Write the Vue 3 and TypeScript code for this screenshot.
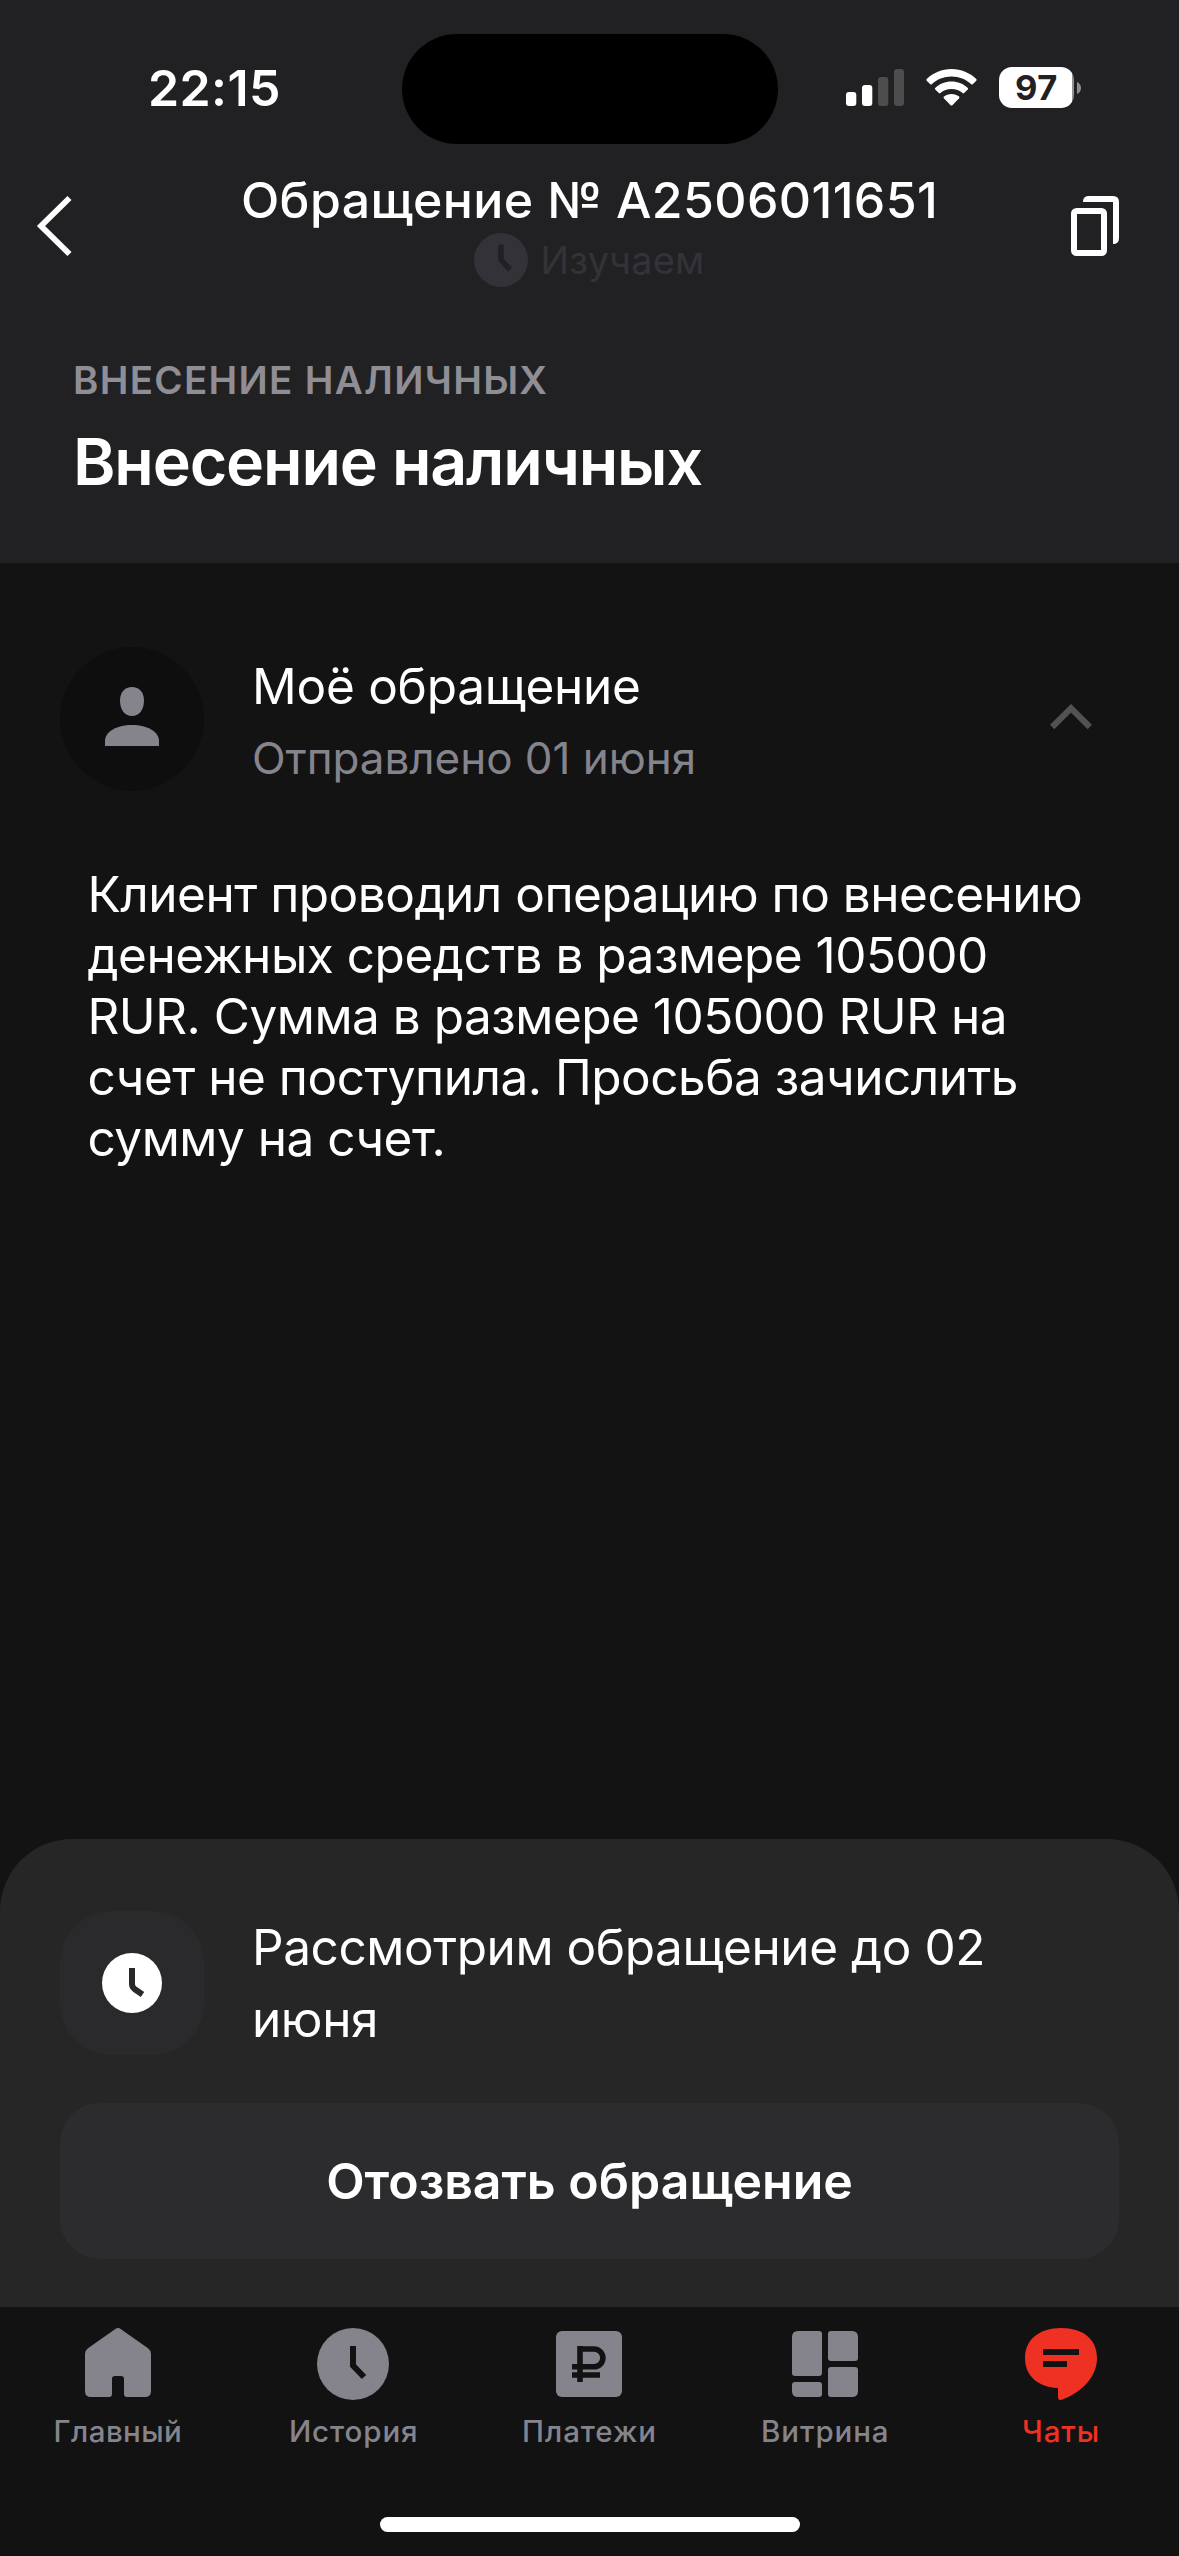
<script setup lang="ts">
interface Tab {
  id: 'home' | 'history' | 'payments' | 'showcase' | 'chats'
  label: string
  active?: boolean
}

const appeal = {
  number: 'Обращение № A2506011651',
  status: 'Изучаем',
  category: 'ВНЕСЕНИЕ НАЛИЧНЫХ',
  title: 'Внесение наличных',
  sent: 'Отправлено 01 июня',
  lines: [
    'Клиент проводил операцию по внесению',
    'денежных средств в размере 105000',
    'RUR. Сумма в размере 105000 RUR на',
    'счет не поступила. Просьба зачислить',
    'сумму на счет.',
  ],
}

const tabs: Tab[] = [
  { id: 'home', label: 'Главный' },
  { id: 'history', label: 'История' },
  { id: 'payments', label: 'Платежи' },
  { id: 'showcase', label: 'Витрина' },
  { id: 'chats', label: 'Чаты', active: true },
]
</script>

<template>
  <div class="screen">
    <header class="top">
      <div class="status-bar">
        <div class="time">22:15</div>
        <div class="island"></div>
        <div class="indicators">
          <svg class="signal" width="58" height="37" viewBox="0 0 58 37">
            <rect x="0" y="23" width="10.3" height="14" rx="3" fill="#fff" />
            <rect x="16" y="16" width="10.3" height="21" rx="3" fill="#fff" />
            <rect x="32" y="8" width="10.3" height="29" rx="3" fill="#4d4d4e" />
            <rect x="48" y="0" width="10" height="37" rx="3" fill="#4d4d4e" />
          </svg>
          <svg class="wifi" width="51" height="37" viewBox="0 0 51 37" fill="#fff">
            <path d="M25.5 0C35.2 0 43.9 3.800 50.300 10.100Q51 10.900 50.300 11.700L46.700 15.200Q46 15.900 45.200 15.200C40 10.300 33.100 7.500 25.500 7.500S11 10.300 5.800 15.200Q5 15.900 4.300 15.200L.7 11.700Q0 10.900.7 10.100C7.100 3.800 15.800 0 25.500 0Z" />
            <path d="M25.500 12.600C31.900 12.600 37.500 15 41.800 18.900Q42.500 19.700 41.800 20.400L38.100 24.100Q37.400 24.700 36.600 24.100C33.600 21.500 29.800 20 25.500 20S17.400 21.500 14.400 24.100Q13.600 24.700 12.900 24.100L9.200 20.400Q8.500 19.700 9.200 18.900C13.500 15 19.100 12.600 25.500 12.600Z" />
            <path d="M25.500 24.900C28.400 24.900 31 25.900 33.100 27.500Q33.900 28.300 33.100 29.200L26.400 36.200Q25.500 37 24.600 36.200L17.900 29.200Q17.100 28.300 17.900 27.500C20 25.900 22.600 24.900 25.500 24.900Z" />
          </svg>
          <div class="battery">97</div>
          <svg class="nub" width="4" height="12" viewBox="0 0 4 12"><path d="M0 0C2.700 1.200 4 3.400 4 6S2.700 10.800 0 12Z" fill="#8d8d8e" /></svg>
        </div>
      </div>

      <nav class="nav">
        <button class="nav-btn" aria-label="Назад">
          <svg width="36" height="60" viewBox="0 0 36 60"><path d="M32.500 2L4 30L32.500 58" fill="none" stroke="#fff" stroke-width="5.800" /></svg>
        </button>
        <div class="nav-title">
          <div class="number">{{ appeal.number }}</div>
          <div class="status">
            <svg width="54" height="54" viewBox="0 0 54 54">
              <circle cx="27" cy="27" r="27" fill="#333238" />
              <path d="M27 11.500V27L36 36.500" fill="none" stroke="#212123" stroke-width="5.500" />
            </svg>
            <span>{{ appeal.status }}</span>
          </div>
        </div>
        <button class="nav-btn" aria-label="Копировать">
          <svg width="48" height="60" viewBox="0 0 48 60" fill="none" stroke="#fff" stroke-width="6">
            <rect x="3" y="15" width="30" height="42" rx="2.500" />
            <path d="M12 6V5.500Q12 0 18 0H42Q48 0 48 6V42Q48 48 42 48V6Z" fill="#fff" stroke="none" />
          </svg>
        </button>
      </nav>

      <div class="heading">
        <div class="category">{{ appeal.category }}</div>
        <h1>{{ appeal.title }}</h1>
      </div>
    </header>

    <main class="content">
      <section class="entry">
        <div class="avatar">
          <svg width="54" height="60" viewBox="0 0 54 60" fill="#85848c">
            <path d="M27 0C34.200 0 39 5.200 39 13.500C39 22.500 34.500 29 27 29S15 22.500 15 13.500C15 5.200 19.800 0 27 0Z" />
            <path d="M0 59V54C0 45 11 38 27 38S54 45 54 54V59Z" />
          </svg>
        </div>
        <div class="entry-text">
          <div class="entry-title">Моё обращение</div>
          <div class="entry-date">{{ appeal.sent }}</div>
        </div>
        <svg class="chevron" width="42" height="26" viewBox="0 0 42 26"><path d="M2.200 23L21 4.300L39.800 23" fill="none" stroke="#525254" stroke-width="6" /></svg>
      </section>
      <p class="message">
        <span v-for="line in appeal.lines" :key="line">{{ line }}</span>
      </p>
    </main>

    <section class="sheet">
      <div class="notice">
        <div class="tile">
          <svg width="60" height="60" viewBox="0 0 60 60">
            <circle cx="30" cy="30" r="30" fill="#fff" />
            <path d="M30 15V31Q30 34 32.500 36L40.500 41.500" fill="none" stroke="#29292b" stroke-width="6" />
          </svg>
        </div>
        <p>Рассмотрим обращение до 02<br />июня</p>
      </div>
      <button class="action">Отозвать обращение</button>
    </section>

    <footer class="tab-bar">
      <div class="tabs">
        <div v-for="tab in tabs" :key="tab.id" class="tab" :class="{ active: tab.active }">
          <svg width="72" height="72" viewBox="0 0 72 72" fill="currentColor">
            <path v-if="tab.id === 'home'" d="M33 1.200Q36-1.200 39 1.200L66 20.300Q69 22.500 69 26V63Q69 69 63 69H45Q42 69 42 66V51Q42 48 39 48H33Q30 48 30 51V66Q30 69 27 69H9Q3 69 3 63V26Q3 22.500 6 20.300Z" />
            <template v-else-if="tab.id === 'history'">
              <circle cx="36" cy="36" r="36" />
              <path d="M36 18V37.500L47 49" fill="none" stroke="#121212" stroke-width="6" />
            </template>
            <template v-else-if="tab.id === 'payments'">
              <rect x="3" y="3" width="66" height="66" rx="6" />
              <path d="M27 54V18M27 21H41A8.900 8.900 0 0 1 41 38.800H19M19 47H47" fill="none" stroke="#121212" stroke-width="5.600" />
            </template>
            <g v-else-if="tab.id === 'showcase'">
              <path d="M9 3H30Q33 3 33 6V45Q33 48 30 48H6Q3 48 3 45V9Q3 3 9 3Z" />
              <path d="M42 3H63Q69 3 69 9V30Q69 33 66 33H42Q39 33 39 30V6Q39 3 42 3Z" />
              <path d="M6 54H30Q33 54 33 57V66Q33 69 30 69H9Q3 69 3 63V57Q3 54 6 54Z" />
              <path d="M42 39H66Q69 39 69 42V63Q69 69 63 69H42Q39 69 39 66V42Q39 39 42 39Z" />
            </g>
            <template v-else>
              <path d="M36 0C58 0 72 11 72 30C72 49 57 64 37.500 71.600Q33 73 33 69V60C13 59 0 48 0 30S14 0 36 0Z" />
              <path d="M18 24H54M18 36H42" fill="none" stroke="#121212" stroke-width="6" />
            </template>
          </svg>
          <span>{{ tab.label }}</span>
        </div>
      </div>
      <div class="home-indicator"></div>
    </footer>
  </div>
</template>

<style>
body {
  background: #131313;
}
</style>

<style scoped>
.screen {
  display: flex;
  flex-direction: column;
  width: 1179px;
  height: 2556px;
  overflow: hidden;
  background: #131313;
  color: #fff;
  font-family: Inter, 'Liberation Sans', sans-serif;
}

button {
  padding: 0;
  border: 0;
  background: none;
  color: inherit;
  font-family: inherit;
}

svg {
  display: block;
  flex: none;
  overflow: visible;
}

.top {
  height: 563px;
  background: #212123;
}

.status-bar {
  display: grid;
  grid-template-columns: 402px 376px 401px;
  height: 136px;
  padding-top: 34px;
}

.time {
  padding-left: 148px;
  font-size: 50px;
  font-weight: 600;
  line-height: 108px;
  letter-spacing: 0.4px;
}

.island {
  height: 110px;
  border-radius: 55px;
  background: #000;
}

.indicators {
  display: flex;
  align-items: center;
  height: 107px;
  padding-left: 68px;
}

.wifi {
  margin-left: 22px;
}

.battery {
  width: 75px;
  height: 41px;
  margin-left: 22px;
  border-radius: 13px;
  background: linear-gradient(90deg, #fff 73.5px, #909091 73.5px);
  color: #212123;
  font-size: 34.5px;
  font-weight: 700;
  line-height: 41px;
  letter-spacing: 0.5px;
  text-align: center;
}

.nub {
  margin-left: 3px;
}

.nav {
  display: flex;
  align-items: flex-start;
  justify-content: space-between;
  height: 120px;
  padding: 0 60px 0 37px;
}

.nav-btn {
  width: 48px;
  margin-top: 26px;
}

.nav-title {
  display: flex;
  flex-direction: column;
  align-items: center;
}

.number {
  margin-left: 23px;
  font-size: 50px;
  font-weight: 500;
  line-height: 60px;
  letter-spacing: 0.38px;
}

.status {
  display: flex;
  gap: 13px;
  margin-top: 3px;
  margin-left: 22px;
  color: #333238;
  font-size: 38px;
  line-height: 55px;
  letter-spacing: 0.15px;
}

.heading {
  padding: 66px 0 0 73px;
}

.category {
  color: #8f8e95;
  font-size: 38.5px;
  font-weight: 600;
  line-height: 48px;
  letter-spacing: 1.3px;
}

h1 {
  margin: 19px 0 0;
  font-size: 64.5px;
  font-weight: 600;
  line-height: 78px;
  letter-spacing: -1.15px;
}

.content {
  flex: 1;
}

.entry {
  display: flex;
  align-items: center;
  height: 144px;
  padding: 84px 87px 0 60px;
}

.avatar {
  display: flex;
  align-items: center;
  justify-content: center;
  width: 144px;
  height: 144px;
  border-radius: 50%;
  background: #0e0e0e;
}

.avatar svg {
  margin-top: -4px;
}

.entry-text {
  flex: 1;
  margin-left: 48px;
  padding-top: 7px;
}

.entry-title {
  font-size: 49.5px;
  line-height: 72px;
  letter-spacing: -0.25px;
}

.entry-date {
  color: #85848c;
  font-size: 44px;
  line-height: 73px;
  letter-spacing: -0.05px;
}

.chevron {
  margin-top: -4px;
}

.message {
  display: flex;
  flex-direction: column;
  margin: 73px 0 0 87.5px;
  font-size: 49.5px;
  line-height: 61px;
  letter-spacing: -0.49px;
  white-space: nowrap;
}

.sheet {
  height: 396px;
  padding: 72px 60px 0;
  border-radius: 72px 72px 0 0;
  background: #262626;
}

.notice {
  display: flex;
}

.tile {
  display: flex;
  align-items: center;
  justify-content: center;
  width: 144px;
  height: 144px;
  border-radius: 52px;
  background: #2a2a2c;
}

.notice p {
  margin: 0 0 0 48px;
  font-size: 49.5px;
  line-height: 72px;
  letter-spacing: -0.42px;
}

.action {
  display: block;
  width: 100%;
  height: 156px;
  margin-top: 48px;
  border-radius: 40px;
  background: #2c2c2e;
  font-size: 50px;
  font-weight: 600;
  line-height: 156px;
}

.sheet,
.tab-bar {
  box-sizing: content-box;
}

.tab-bar {
  height: 249px;
  background: #121212;
}

.tabs {
  display: grid;
  grid-template-columns: repeat(5, 1fr);
  height: 210px;
}

.tab {
  display: flex;
  flex-direction: column;
  align-items: center;
  padding-top: 21px;
  color: #85848c;
  font-size: 29.5px;
  font-weight: 500;
  letter-spacing: 0.9px;
}

.tab svg {
  margin-right: 0.6px;
}

.tab span {
  margin-top: 12px;
  line-height: 38px;
}

.tab:first-child span {
  letter-spacing: 0.4px;
}

.tab.active {
  color: #ef3124;
}

.home-indicator {
  width: 420px;
  height: 15px;
  margin: 0 auto;
  border-radius: 8px;
  background: #fff;
}
</style>
